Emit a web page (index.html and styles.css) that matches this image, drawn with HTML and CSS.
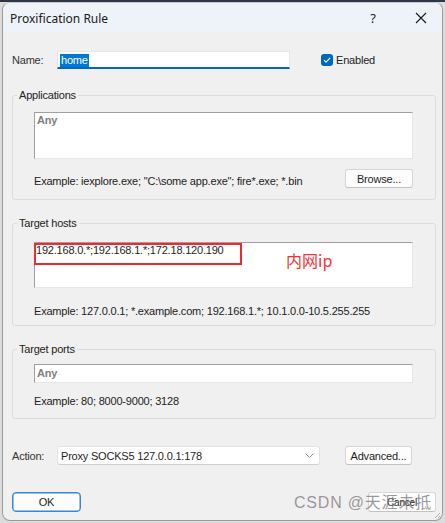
FILE: index.html
```html
<!DOCTYPE html>
<html>
<head>
<meta charset="utf-8">
<link rel="stylesheet" href="styles.css">
</head>
<body>
<div class="window">
  <div class="titlebar">
    <span class="title">Proxification Rule</span>
    <span class="help">?</span>
    <span class="close"><svg width="12" height="12" viewBox="0 0 12 12"><path d="M1 1L11 11M11 1L1 11" stroke="#1a1a1a" stroke-width="1.1" fill="none"/></svg></span>
  </div>
  <div class="content">
    <div class="row name-row">
      <span class="lbl">Name:</span>
      <div class="name-input"><span class="sel">home</span></div>
      <span class="check"><span class="box"><svg width="12" height="12" viewBox="0 0 12 12"><path d="M3 6.2L5 8.2L9.2 3.8" stroke="#fff" stroke-width="1.1" fill="none"/></svg></span>Enabled</span>
    </div>

    <fieldset class="group g-apps">
      <legend>Applications</legend>
      <div class="edit edit-apps"><span class="any">Any</span></div>
      <div class="hint-row">
        <span class="hint">Example: iexplore.exe; "C:\some app.exe"; fire*.exe; *.bin</span>
        <span class="btn btn-browse">Browse...</span>
      </div>
    </fieldset>

    <fieldset class="group g-hosts">
      <legend>Target hosts</legend>
      <div class="edit edit-hosts">
        <span class="hosts-text">192.168.0.*;192.168.1.*;172.18.120.190</span>
        <span class="redbox"></span>
        <span class="note">内网ip</span>
      </div>
      <div class="hint hint-hosts">Example: 127.0.0.1; *.example.com; 192.168.1.*; 10.1.0.0-10.5.255.255</div>
    </fieldset>

    <fieldset class="group g-ports">
      <legend>Target ports</legend>
      <div class="edit edit-ports"><span class="any">Any</span></div>
      <div class="hint hint-ports">Example: 80; 8000-9000; 3128</div>
    </fieldset>

    <div class="row action-row">
      <span class="lbl">Action:</span>
      <div class="select"><span>Proxy SOCKS5 127.0.0.1:178</span><svg class="chev" width="9" height="5" viewBox="0 0 9 5"><path d="M0.5 0.5L4.5 4.5L8.5 0.5" stroke="#8a8a8a" stroke-width="1" fill="none"/></svg></div>
      <span class="btn btn-adv">Advanced...</span>
    </div>

    <div class="row bottom-row">
      <span class="btn btn-ok">OK</span>
      <span class="btn btn-cancel">Cancel</span>
      <span class="watermark">CSDN @天涯未抵</span>
    </div>
  </div>
  <svg class="grip" width="8" height="8" viewBox="0 0 8 8"><path d="M7 2L2 7M7 5L5 7" stroke="#b0b0b0" stroke-width="1"/></svg>
</div>
</body>
</html>
```
FILE: styles.css
```css
html, body {
  margin: 0;
  padding: 0;
}
body {
  width: 445px;
  height: 523px;
  background: #dcdcdc;
  border-top: 2px solid #2c3848;
  box-sizing: border-box;
  overflow: hidden;
  font-family: Tahoma, "Liberation Sans", Arial, sans-serif;
  font-size: 11px;
  letter-spacing: -0.2px;
  color: #1e1e1e;
}
.window {
  position: relative;
  margin-left: 2px;
  width: 441px;
  height: 519px;
  box-sizing: border-box;
  border: 1px solid #9a9a9a;
  border-top-color: #c8c8c8;
  border-radius: 8px;
  background: #f0f0f0;
  overflow: hidden;
}
.titlebar {
  height: 30px;
  background: #eef3f9;
  display: flex;
  align-items: center;
  font-family: "Noto Sans", "Open Sans", sans-serif;
  font-size: 12px;
  letter-spacing: 0;
  color: #1a1a1a;
}
.title {
  margin-left: 7px;
  flex: 1;
}
.help {
  width: 14px;
  text-align: center;
  font-size: 13px;
  margin-right: 35px;
}
.close {
  display: flex;
  margin-right: 15px;
}
.content {
  padding: 0 6px 0 9px;
}
.row {
  display: flex;
  align-items: center;
}
.lbl {
  width: 45px;
  color: #333;
}
.name-row {
  margin-top: 18px;
  height: 18px;
}
.name-input {
  width: 233px;
  height: 18px;
  box-sizing: border-box;
  background: #fff;
  border: 1px solid #e6e6e6;
  border-bottom: 2px solid #0067c0;
  padding: 2px 0 0 2px;
  display: flex;
  align-items: flex-start;
}
.sel {
  background: #0078d7;
  color: #fff;
  line-height: 13px;
  padding: 0 1px;
}
.check {
  display: flex;
  align-items: center;
  margin-left: 31px;
  color: #222;
}
.box {
  width: 12px;
  height: 12px;
  background: #0067c0;
  border-radius: 3px;
  display: flex;
  margin-right: 3px;
}
.group {
  margin: 0;
  border: 1px solid #dcdcdc;
  border-radius: 3px;
  padding: 0 22px 0 21px;
  min-width: 0;
}
.group legend {
  padding: 0 2px;
  margin-left: -17px;
  line-height: 14px;
  color: #222;
}
.g-apps {
  margin-top: 19px;
  padding-bottom: 11px;
}
.edit {
  background: #fff;
  border: 1px solid #a0a0a0;
  border-right-color: #e6e6e6;
  border-bottom-color: #e6e6e6;
  box-sizing: border-box;
  position: relative;
}
.edit-apps {
  margin-top: 10px;
  height: 47px;
  padding: 1px 2px;
}
.any {
  color: #808080;
  font-weight: bold;
  line-height: 13px;
}
.hint-row {
  margin-top: 10px;
  display: flex;
  align-items: flex-end;
  justify-content: space-between;
}
.hint {
  color: #222;
  line-height: 14px;
}
.btn {
  display: flex;
  align-items: center;
  justify-content: center;
  box-sizing: border-box;
  background: #fdfdfd;
  border: 1px solid #d6d6d6;
  border-bottom-color: #c2c2c2;
  border-radius: 3px;
  color: #1e1e1e;
}
.btn-browse {
  width: 68px;
  height: 19px;
}
.g-hosts {
  margin-top: 16px;
  padding-bottom: 7px;
}
.edit-hosts {
  margin-top: 12px;
  height: 46px;
  padding: 1px 1px;
}
.hosts-text {
  line-height: 13px;
}
.redbox {
  position: absolute;
  left: -1px;
  top: 0px;
  width: 208px;
  height: 22px;
  box-sizing: border-box;
  border: 2px solid #ee2a2e;
}
.note {
  position: absolute;
  left: 251px;
  top: 7px;
  color: #f03434;
  font-family: "Noto Sans CJK SC", "Noto Sans", sans-serif;
  font-size: 16px;
  line-height: 20px;
  letter-spacing: 0;
}
.hint-hosts {
  margin-top: 16px;
}
.g-ports {
  margin-top: 16px;
  padding-bottom: 10px;
}
.edit-ports {
  margin-top: 8px;
  height: 19px;
  padding: 2px 2px;
}
.hint-ports {
  margin-top: 11px;
}
.action-row {
  margin-top: 27px;
  height: 19px;
}
.select {
  width: 263px;
  height: 19px;
  box-sizing: border-box;
  background: #fff;
  border: 1px solid #e3e3e3;
  border-bottom-color: #cfcfcf;
  border-radius: 3px;
  display: flex;
  align-items: center;
  justify-content: space-between;
  padding: 0 5px 0 3px;
}
.btn-adv {
  margin-left: 25px;
  width: 67px;
  height: 19px;
}
.bottom-row {
  margin-top: 27px;
  height: 20px;
  justify-content: space-between;
  position: relative;
}
.btn-ok {
  width: 69px;
  height: 20px;
  border: 1px solid #3a86d6;
  box-shadow: inset 0 0 0 0.5px #3a86d6;
  border-radius: 4px;
}
.btn-cancel {
  width: 68px;
  height: 20px;
  margin-right: 0;
  font-size: 10px;
}
.watermark {
  position: absolute;
  right: 4px;
  top: 1px;
  font-family: "Liberation Sans", "Noto Sans CJK SC", sans-serif;
  font-size: 16px;
  line-height: 20px;
  color: rgba(120, 120, 120, 0.75);
  letter-spacing: 0.8px;
}
.grip {
  position: absolute;
  right: 1px;
  bottom: 1px;
}
```
